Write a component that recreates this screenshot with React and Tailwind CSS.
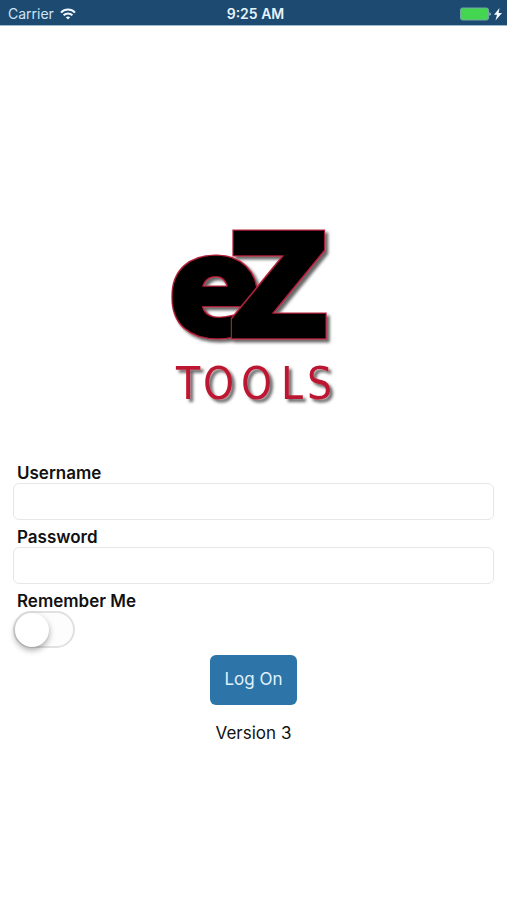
import React, { useState } from "react";

function StatusBar() {
  return (
    <header className="grid h-[26px] grid-cols-3 items-center border-b border-[#9fb9cd] bg-[#1c4a70] pl-2 pr-1 pt-0.5 text-sm text-[#cfe4f5]">
      <div className="flex items-center gap-1.5">
        <span>Carrier</span>
        <svg width="16" height="12" viewBox="0 0 16 12" fill="none" stroke="#f1f8fd" strokeWidth="2" aria-hidden="true">
          <path d="M1 4.6C4.9.6 11.1.6 15 4.6" />
          <path d="M3.6 7.3c2.5-2.4 6.3-2.4 8.8 0" />
          <path d="M5.8 9.3 8 11.6l2.2-2.3c-1.3-1.1-3.1-1.1-4.4 0Z" fill="#f1f8fd" stroke="none" />
        </svg>
      </div>
      <span className="whitespace-nowrap text-center font-semibold text-[#e6f3fc]">9:25 AM</span>
      <svg className="justify-self-end" width="43" height="14" viewBox="0 0 43 14" aria-hidden="true">
        <rect x="0.5" y="1" width="28" height="12" rx="2" fill="#44d651" stroke="#73a7a6" />
        <path d="M29.5 5.2c1.5.3 1.5 3.3 0 3.6Z" fill="#d5e6f2" />
        <path d="M39.5 1 34 7.8h3l-1.5 5.6L42 6.1h-3.4Z" fill="#f4faff" />
      </svg>
    </header>
  );
}

function Logo() {
  return (
    <svg width="176" height="190" viewBox="0 0 176 190" role="img" aria-label="eZ Tools" overflow="visible">
      <defs>
        <filter id="shadow" x="-10%" y="-10%" width="125%" height="125%">
          <feDropShadow dx="3" dy="3" stdDeviation="1.6" floodColor="#000" floodOpacity="0.6" />
        </filter>
        <filter id="outline" x="-10%" y="-10%" width="120%" height="120%">
          <feMorphology in="SourceAlpha" operator="dilate" radius="1" result="grown" />
          <feFlood floodColor="#b3203a" />
          <feComposite in2="grown" operator="in" result="edge" />
          <feMerge>
            <feMergeNode in="edge" />
            <feMergeNode in="SourceGraphic" />
          </feMerge>
        </filter>
      </defs>
      <g
        filter="url(#shadow)"
        stroke="#000"
        strokeWidth="5"
        className="font-['DejaVu_Sans',sans-serif] font-bold"
      >
        <text x="3" y="109" fontSize="136" filter="url(#outline)">e</text>
        <text x="62" y="111" fontSize="140" filter="url(#outline)">Z</text>
      </g>
      <g filter="url(#shadow)">
        <text
          x="10 37 75 115 141"
          y="174"
          fill="#bd1730"
          fontSize="44"
          className="font-['DejaVu_Sans_Condensed',sans-serif]"
        >
          TOOLS
        </text>
      </g>
    </svg>
  );
}

function Field({ id, label, type }) {
  return (
    <div>
      <label htmlFor={id} className="block px-1 font-semibold leading-5">{label}</label>
      <input
        id={id}
        type={type}
        className="block h-[37px] w-full rounded-md border border-[#e7e7e7] bg-white px-3 outline-none focus:border-[#2d75a8]"
      />
    </div>
  );
}

export default function App() {
  const [remember, setRemember] = useState(false);
  return (
    <div className="min-h-screen bg-white font-[Inter,sans-serif] text-[17px] text-[#111111]">
      <StatusBar />
      <main className="px-[13px] pt-[199px]">
        <div className="flex justify-center">
          <Logo />
        </div>
        <form className="mt-12 flex flex-col gap-[7px]" onSubmit={(e) => e.preventDefault()}>
          <Field id="username" label="Username" type="text" />
          <Field id="password" label="Password" type="password" />
          <div>
            <label htmlFor="remember" className="block px-1 font-semibold leading-5">Remember Me</label>
            <input
              id="remember"
              type="checkbox"
              role="switch"
              checked={remember}
              onChange={(e) => setRemember(e.target.checked)}
              className="flex h-[37px] w-[62px] cursor-pointer appearance-none items-center rounded-full border-2 border-[#e1e1e1] bg-[#fdfdfd] before:block before:size-[34px] before:rounded-full before:bg-white before:shadow-[0_3px_6px_rgba(0,0,0,0.35)] checked:justify-end checked:bg-[#44d651]"
            />
          </div>
          <button type="submit" className="h-[50px] self-center rounded-md bg-[#2d75a8] px-[14px] text-[#e0f1fd]">
            Log On
          </button>
        </form>
        <p className="mt-4 text-center leading-6">Version 3</p>
      </main>
    </div>
  );
}
